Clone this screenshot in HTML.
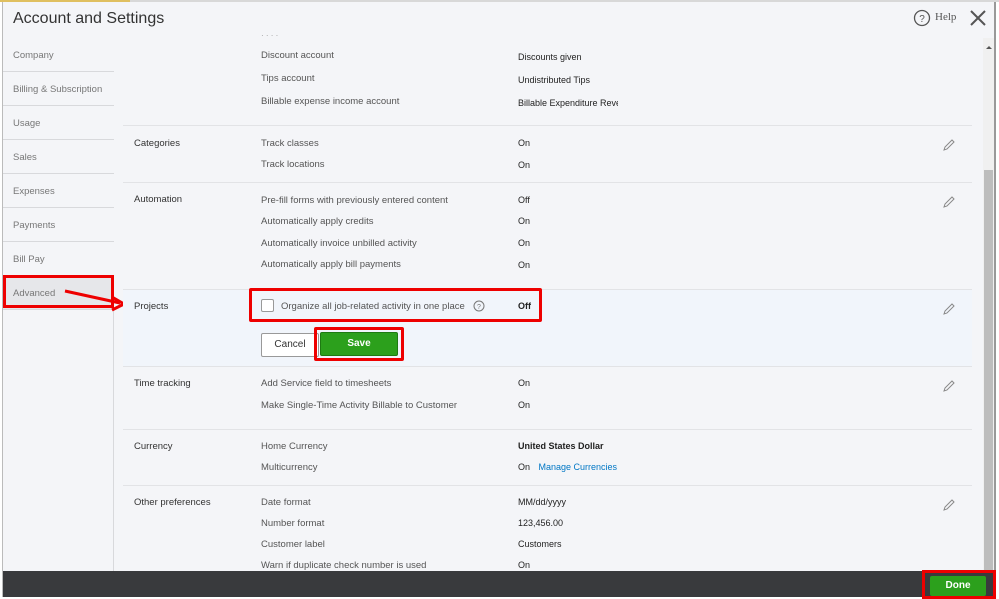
<!DOCTYPE html>
<html><head><meta charset="utf-8"><style>
*{margin:0;padding:0;box-sizing:border-box}
body{width:999px;height:599px;overflow:hidden;background:#fff;font-family:"Liberation Sans",Arial,sans-serif;position:relative}
.a{position:absolute;white-space:nowrap}
.l{font-size:9.5px;color:#555}
.v{font-size:9px;color:#222}
.sec{font-size:9.5px;color:#333}
.sb{position:absolute;left:3px;width:111px;height:34px;border-bottom:1px solid #d8d9dc;font-size:9.5px;color:#777;padding:12px 0 0 10px;background:#f4f5f8}
.hr{position:absolute;left:123px;width:849px;height:1px;background:#e2e3e6}
</style></head><body>
<div class="a" style="left:0;top:0;width:999px;height:2px;background:#d8d8d8"></div>
<div class="a" style="left:0;top:0;width:130px;height:2px;background:#e0c060"></div>
<div class="a" style="left:2px;top:2px;width:994px;height:595px;background:#f4f5f8;border-left:1px solid #bbb;border-right:2px solid #999"></div>
<div class="a" style="left:13px;top:10px;font-size:16px;color:#333">Account and Settings</div>
<svg class="a" style="left:913px;top:9px" width="18" height="18"><circle cx="9" cy="9" r="7.5" fill="none" stroke="#555" stroke-width="1.3"/><text x="9" y="13" font-size="10" text-anchor="middle" fill="#555" font-family="Liberation Sans">?</text></svg>
<div class="a" style="left:935px;top:11px;font-size:11px;color:#555;font-family:'Liberation Serif',serif">Help</div>
<svg class="a" style="left:968px;top:8px" width="20" height="20"><path d="M3 3L17 17M17 3L3 17" stroke="#555" stroke-width="2"/></svg>
<div class="a" style="left:113px;top:38px;width:1px;height:533px;background:#d8d9dc"></div>
<div class="sb" style="top:38px">Company</div>
<div class="sb" style="top:72px">Billing &amp; Subscription</div>
<div class="sb" style="top:106px">Usage</div>
<div class="sb" style="top:140px">Sales</div>
<div class="sb" style="top:174px">Expenses</div>
<div class="sb" style="top:208px">Payments</div>
<div class="sb" style="top:242px">Bill Pay</div>
<div class="sb" style="top:276px;background:#e6e7ea">Advanced</div>
<div class="a" style="left:3px;top:275px;width:111px;height:33px;border:3px solid #e00"></div>
<svg class="a" style="left:60px;top:285px" width="70" height="30"><path d="M5 6L60 18" stroke="#e00" stroke-width="3"/><path d="M52 12L64 19L52 25" stroke="#e00" stroke-width="3" fill="none"/></svg>
<div class="a" style="left:123px;top:290px;width:849px;height:76px;background:#f1f5fb"></div>
<div class="a l" style="left:261px;top:31px;font-size:8px;color:#999">· · · ·</div>
<div class="a l" style="left:261px;top:50px">Discount account</div><div class="a v" style="left:518px;top:52px">Discounts given</div>
<div class="a l" style="left:261px;top:73px">Tips account</div><div class="a v" style="left:518px;top:75px">Undistributed Tips</div>
<div class="a l" style="left:261px;top:96px">Billable expense income account</div><div class="a v" style="left:518px;top:98px;width:100px;overflow:hidden">Billable Expenditure Reve</div>
<div class="hr" style="top:125px"></div>
<div class="a sec" style="left:134px;top:138px">Categories</div>
<div class="a l" style="left:261px;top:138px">Track classes</div><div class="a v" style="left:518px;top:138px">On</div>
<div class="a l" style="left:261px;top:159px">Track locations</div><div class="a v" style="left:518px;top:160px">On</div>
<div class="hr" style="top:182px"></div>
<div class="a sec" style="left:134px;top:194px">Automation</div>
<div class="a l" style="left:261px;top:195px">Pre-fill forms with previously entered content</div><div class="a v" style="left:518px;top:195px">Off</div>
<div class="a l" style="left:261px;top:216px">Automatically apply credits</div><div class="a v" style="left:518px;top:216px">On</div>
<div class="a l" style="left:261px;top:238px">Automatically invoice unbilled activity</div><div class="a v" style="left:518px;top:238px">On</div>
<div class="a l" style="left:261px;top:259px">Automatically apply bill payments</div><div class="a v" style="left:518px;top:260px">On</div>
<div class="hr" style="top:289px"></div>
<div class="a sec" style="left:134px;top:301px">Projects</div>
<div class="a" style="left:261px;top:299px;width:13px;height:13px;border:1px solid #999;background:#fff;border-radius:2px"></div>
<div class="a l" style="left:281px;top:301px">Organize all job-related activity in one place</div>
<svg class="a" style="left:473px;top:300px" width="12" height="12"><circle cx="6" cy="6" r="5" fill="none" stroke="#777"/><text x="6" y="9" font-size="7" text-anchor="middle" fill="#777">?</text></svg>
<div class="a v" style="left:518px;top:301px;font-weight:bold">Off</div>
<div class="a" style="left:249px;top:288px;width:293px;height:34px;border:3px solid #e00;border-radius:2px"></div>
<div class="a" style="left:261px;top:333px;width:58px;height:24px;border:1px solid #999;background:#fff;border-radius:2px;font-size:10px;color:#333;text-align:center;line-height:22px">Cancel</div>
<div class="a" style="left:314px;top:327px;width:90px;height:34px;border:3px solid #e00;border-radius:2px"></div>
<div class="a" style="left:320px;top:332px;width:78px;height:24px;background:#2ca01c;border:1px solid #1e7a12;color:#fff;font-size:10px;font-weight:bold;text-align:center;line-height:22px;border-radius:2px">Save</div>
<div class="hr" style="top:366px"></div>
<div class="a sec" style="left:134px;top:378px">Time tracking</div>
<div class="a l" style="left:261px;top:378px">Add Service field to timesheets</div><div class="a v" style="left:518px;top:378px">On</div>
<div class="a l" style="left:261px;top:400px">Make Single-Time Activity Billable to Customer</div><div class="a v" style="left:518px;top:400px">On</div>
<div class="hr" style="top:429px"></div>
<div class="a sec" style="left:134px;top:441px">Currency</div>
<div class="a l" style="left:261px;top:441px">Home Currency</div><div class="a v" style="left:518px;top:441px;font-weight:bold">United States Dollar</div>
<div class="a l" style="left:261px;top:462px">Multicurrency</div><div class="a v" style="left:518px;top:462px">On <span style="color:#0077c5;margin-left:6px">Manage Currencies</span></div>
<div class="hr" style="top:485px"></div>
<div class="a sec" style="left:134px;top:497px">Other preferences</div>
<div class="a l" style="left:261px;top:497px">Date format</div><div class="a v" style="left:518px;top:497px">MM/dd/yyyy</div>
<div class="a l" style="left:261px;top:518px">Number format</div><div class="a v" style="left:518px;top:518px">123,456.00</div>
<div class="a l" style="left:261px;top:539px">Customer label</div><div class="a v" style="left:518px;top:539px">Customers</div>
<div class="a l" style="left:261px;top:560px">Warn if duplicate check number is used</div><div class="a v" style="left:518px;top:560px">On</div>
<svg class="a" style="left:942px;top:138px" width="14" height="14"><path d="M2 12L3 9L10 2L12 4L5 11Z" fill="none" stroke="#888" stroke-width="1"/></svg>
<svg class="a" style="left:942px;top:195px" width="14" height="14"><path d="M2 12L3 9L10 2L12 4L5 11Z" fill="none" stroke="#888" stroke-width="1"/></svg>
<svg class="a" style="left:942px;top:302px" width="14" height="14"><path d="M2 12L3 9L10 2L12 4L5 11Z" fill="none" stroke="#888" stroke-width="1"/></svg>
<svg class="a" style="left:942px;top:379px" width="14" height="14"><path d="M2 12L3 9L10 2L12 4L5 11Z" fill="none" stroke="#888" stroke-width="1"/></svg>
<svg class="a" style="left:942px;top:498px" width="14" height="14"><path d="M2 12L3 9L10 2L12 4L5 11Z" fill="none" stroke="#888" stroke-width="1"/></svg>
<div class="a" style="left:983px;top:38px;width:11px;height:533px;background:#f0f0f0"></div>
<div class="a" style="left:984px;top:170px;width:9px;height:400px;background:#bdbdbd"></div>
<div class="a" style="left:986px;top:43px;width:0;height:0;border:3px solid transparent;border-bottom:3px solid #555"></div>
<div class="a" style="left:3px;top:571px;width:993px;height:26px;background:#393a3d"></div>
<div class="a" style="left:922px;top:570px;width:74px;height:29px;border:3px solid #e00"></div>
<div class="a" style="left:930px;top:576px;width:56px;height:20px;background:#2ca01c;color:#fff;font-size:10px;font-weight:bold;text-align:center;line-height:20px;border-radius:2px">Done</div>
</body></html>
